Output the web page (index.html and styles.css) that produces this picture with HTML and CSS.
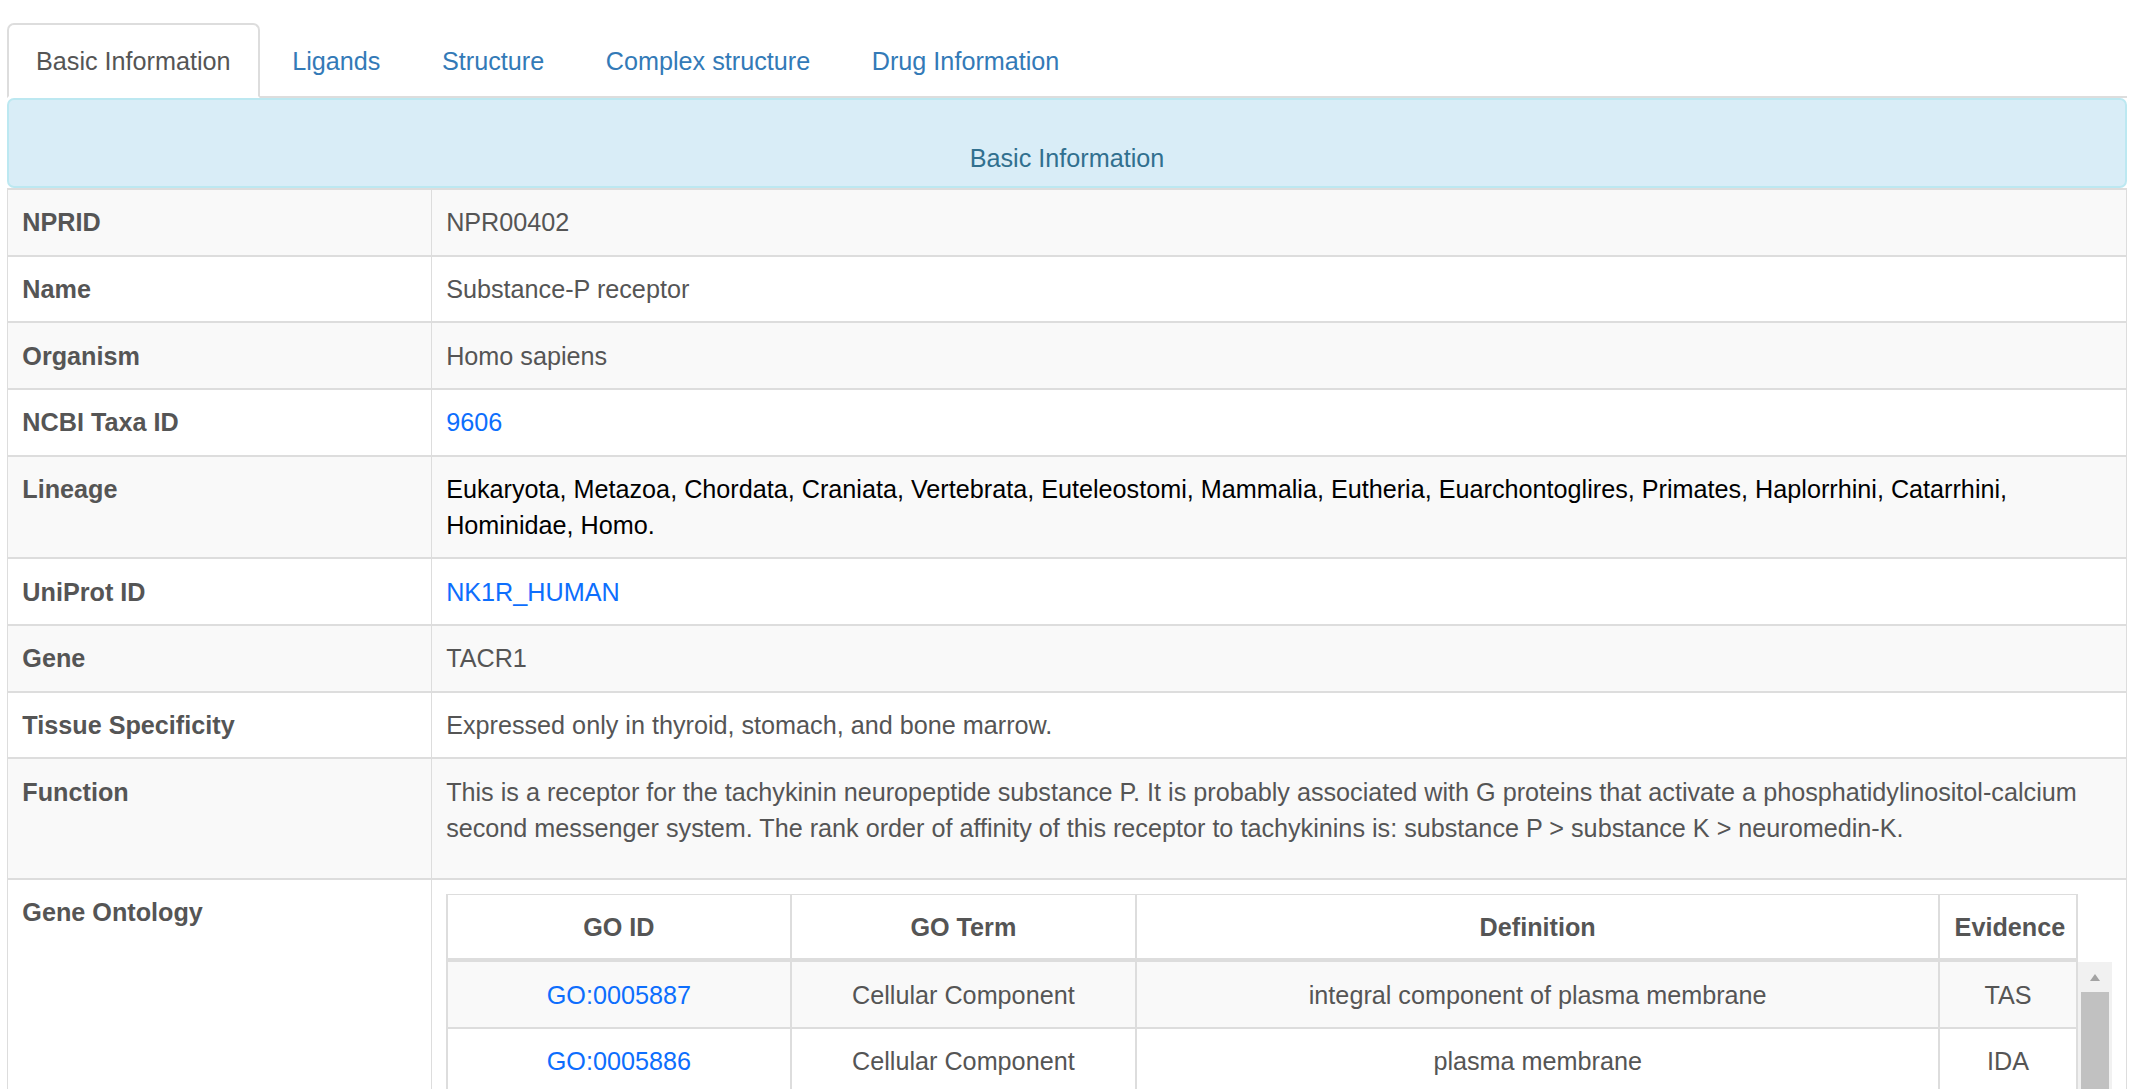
FILE: index.html
```html
<!DOCTYPE html>
<html lang="en">
<head>
<meta charset="utf-8">
<title>NPR00402 - Substance-P receptor</title>
<link rel="stylesheet" href="styles.css">
</head>
<body>
<div class="page">
  <ul class="tabs">
    <li class="tab active"><a href="#basic">Basic Information</a></li>
    <li class="tab"><a href="#ligands">Ligands</a></li>
    <li class="tab"><a href="#structure">Structure</a></li>
    <li class="tab"><a href="#complex">Complex structure</a></li>
    <li class="tab"><a href="#drug">Drug Information</a></li>
  </ul>
  <div class="tab-content">
    <div class="heading">Basic Information</div>
    <table class="info">
      <tr><th>NPRID</th><td>NPR00402</td></tr>
      <tr><th>Name</th><td>Substance-P receptor</td></tr>
      <tr><th>Organism</th><td>Homo sapiens</td></tr>
      <tr><th>NCBI Taxa ID</th><td><a class="link" href="#taxa">9606</a></td></tr>
      <tr><th>Lineage</th><td class="dark">Eukaryota, Metazoa, Chordata, Craniata, Vertebrata, Euteleostomi, Mammalia, Eutheria, Euarchontoglires, Primates, Haplorrhini, Catarrhini, Hominidae, Homo.</td></tr>
      <tr><th>UniProt ID</th><td><a class="link" href="#uniprot">NK1R_HUMAN</a></td></tr>
      <tr><th>Gene</th><td>TACR1</td></tr>
      <tr><th>Tissue Specificity</th><td>Expressed only in thyroid, stomach, and bone marrow.</td></tr>
      <tr><th>Function</th><td><p class="func">This is a receptor for the tachykinin neuropeptide substance P. It is probably associated with G proteins that activate a phosphatidylinositol-calcium second messenger system. The rank order of affinity of this receptor to tachykinins is: substance P &gt; substance K &gt; neuromedin-K.</p></td></tr>
      <tr><th>Gene Ontology</th><td>
        <div class="go">
          <div class="go-head">
            <div class="go-wrap">
              <table class="go-table">
                <colgroup><col class="c1"><col class="c2"><col class="c3"><col class="c4"></colgroup>
                <thead><tr><th>GO ID</th><th>GO Term</th><th>Definition</th><th>Evidence</th></tr></thead>
              </table>
            </div>
            <div class="go-spacer"></div>
          </div>
          <div class="go-body">
            <div class="go-wrap">
              <table class="go-table">
                <colgroup><col class="c1"><col class="c2"><col class="c3"><col class="c4"></colgroup>
                <tbody>
                  <tr><td><a class="link" href="#go1">GO:0005887</a></td><td>Cellular Component</td><td>integral component of plasma membrane</td><td>TAS</td></tr>
                  <tr><td><a class="link" href="#go2">GO:0005886</a></td><td>Cellular Component</td><td>plasma membrane</td><td>IDA</td></tr>
                  <tr><td><a class="link" href="#go3">GO:0004995</a></td><td>Molecular Function</td><td>tachykinin receptor activity</td><td>TAS</td></tr>
                  <tr><td><a class="link" href="#go4">GO:0016496</a></td><td>Molecular Function</td><td>substance P receptor activity</td><td>IEA</td></tr>
                  <tr><td><a class="link" href="#go5">GO:0007186</a></td><td>Biological Process</td><td>G protein-coupled receptor signaling pathway</td><td>TAS</td></tr>
                </tbody>
              </table>
            </div>
            <div class="scrollbar">
              <div class="sb-up"><svg width="10" height="7" viewBox="0 0 10 7"><path d="M5 0 L10 7 L0 7 Z" fill="#a3a3a3"/></svg></div>
              <div class="sb-thumb"></div>
            </div>
          </div>
        </div>
      </td></tr>
    </table>
  </div>
</div>
</body>
</html>
```

FILE: styles.css
```css
html, body {
  margin: 0;
  padding: 0;
  overflow: hidden;
  background: #fff;
}

body {
  font-family: "Liberation Sans", Arial, Helvetica, sans-serif;
  font-size: 25.2px;
  line-height: 36px;
  color: #555;
}

.page {
  padding: 23px 4px 0 7px;
}

/* Tabs */
.tabs {
  display: flex;
  list-style: none;
  margin: 0;
  padding: 0;
  border-bottom: 2px solid #ddd;
}

.tab {
  margin-bottom: -2px;
  margin-right: 3.6px;
}

.tab a {
  display: block;
  padding: 18px 27px 17px;
  border: 2px solid transparent;
  border-radius: 7px 7px 0 0;
  color: #337ab7;
  text-decoration: none;
}

.tab.active a {
  color: #555;
  background: #fff;
  border-color: #ddd #ddd transparent;
}

/* Panel heading */
.heading {
  background: #d9edf7;
  border: 2px solid #bce8f1;
  border-radius: 7px;
  color: #31708f;
  text-align: center;
  padding: 40px 27px 10px;
}

/* Info table */
.info {
  width: 100%;
  border-collapse: collapse;
}

.info > tbody > tr > th,
.info > tbody > tr > td {
  padding: 14.33px;
  border-top: 2px solid #ddd;
  border-bottom: 2px solid #ddd;
  border-left: 1px solid #ddd;
  border-right: 1px solid #ddd;
  text-align: left;
  vertical-align: top;
}

.info > tbody > tr > th {
  width: 20%;
  font-weight: bold;
}

.info > tbody > tr:nth-child(odd) {
  background: #f9f9f9;
}

.link {
  color: #0d6efd;
  text-decoration: none;
}

.dark {
  color: #000;
}

.func {
  margin: 0 0 18px;
}

/* GO table */
.go-head,
.go-body {
  display: flex;
}

.go-wrap {
  flex: 1;
  min-width: 0;
}

.go-spacer {
  width: 34px;
}

.go-table {
  width: 100%;
  border-collapse: collapse;
  table-layout: fixed;
}

.go-table .c1 { width: 21.08%; }
.go-table .c2 { width: 21.2%; }
.go-table .c3 { width: 49.29%; }
.go-table .c4 { width: 8.43%; }

.go-table th,
.go-table td {
  text-align: center;
  padding: 14.33px;
  border: 2px solid #ddd;
  white-space: nowrap;
}

.go-table th {
  font-weight: bold;
  border-top-width: 1px;
  border-bottom-width: 4px;
  padding: 13.5px 14.33px;
}

.go-table tbody tr:first-child td {
  border-top: 0;
}

.go-table tbody tr:nth-child(odd) {
  background: #f9f9f9;
}

.go-body {
  height: 420px;
  overflow: hidden;
}

.scrollbar {
  width: 34px;
  background: #f1f1f1;
  display: flex;
  flex-direction: column;
  align-items: center;
}

.sb-up {
  height: 30px;
  display: flex;
  align-items: center;
  justify-content: center;
}

.sb-thumb {
  width: 28px;
  flex: 1;
  background: #c1c1c1;
}
```
